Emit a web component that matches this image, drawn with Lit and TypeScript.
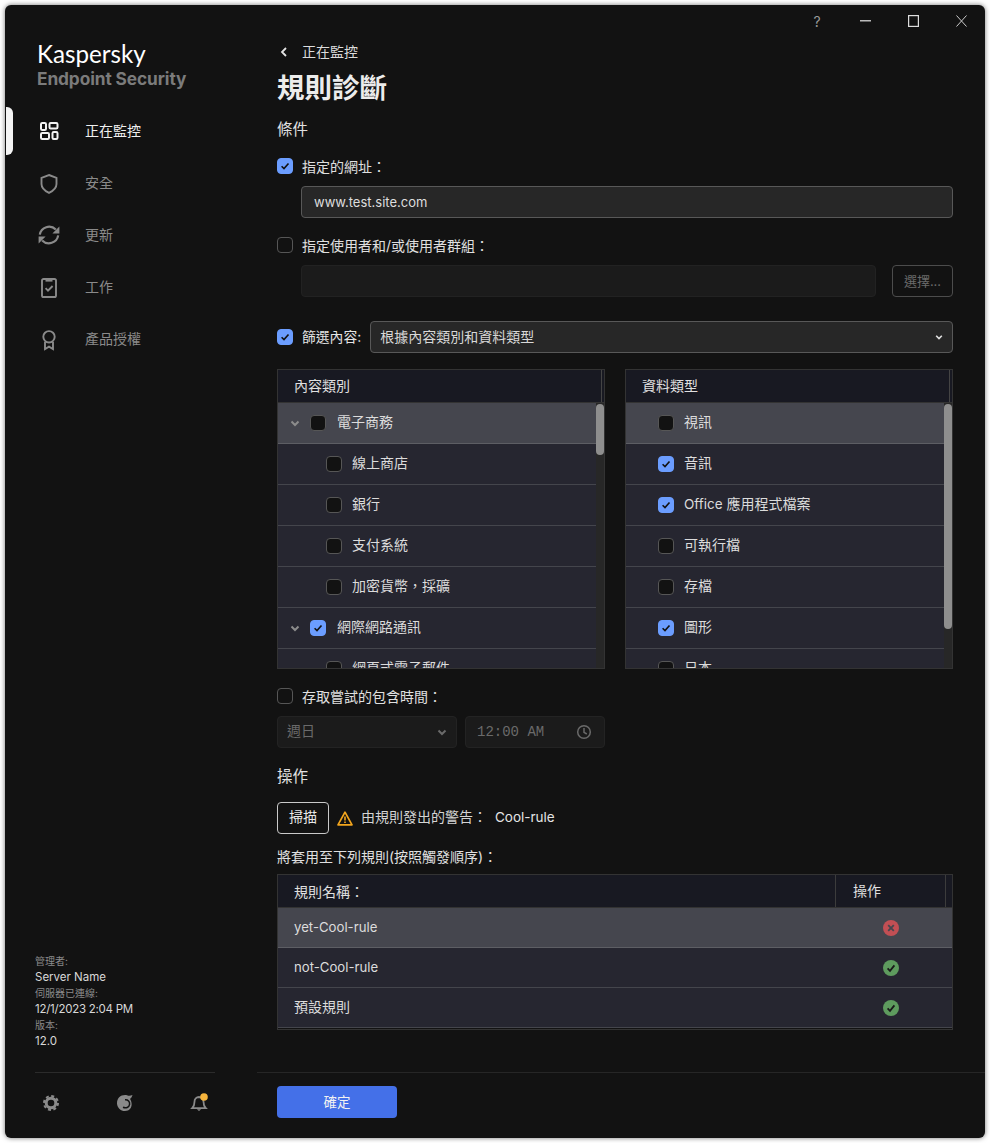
import { LitElement, html, css, svg } from "lit";
import { customElement } from "lit/decorators.js";

const check = (on: boolean) => html`<span class="cb ${on ? "on" : ""}">${on
  ? html`<svg width="10" height="10" viewBox="0 0 10 10"><path d="M1.6 5.2 4 7.6 8.5 2.4" fill="none" stroke="#121212" stroke-width="1.6"/></svg>` : ""}</span>`;
const chev = html`<svg class="chev" width="10" height="10" viewBox="0 0 10 10"><path d="M1.5 3.5 5 7 8.500 3.500" fill="none" stroke="currentColor" stroke-width="2"/></svg>`;

const navIcons = [
  svg`<g fill="none" stroke="#f2f2f2" stroke-width="2"><rect x="1" y="1" width="5" height="7" rx="1.2"/><rect x="9.500" y="1" width="8" height="5.500" rx="1.2"/><rect x="1" y="11" width="8" height="6" rx="1.2"/><rect x="12.500" y="10" width="5" height="7" rx="1.2"/></g>`,
  svg`<path d="M9 1 16.500 3.800V10C16.500 14 13 17 9 18.900 5 17 1.500 14 1.500 10V3.800Z" fill="none" stroke="#8a8a8a" stroke-width="1.900"/>`,
  svg`<g fill="none" stroke="#8a8a8a" stroke-width="2.200"><path d="M-.2 8.600A9.400 9.400 0 0 1 15.800 3.600"/><path d="M18.200 9.400A9.400 9.400 0 0 1 2.200 14.400"/></g><path d="M19.400 .4V7.400H12.400Z M-1.400 17.600V10.600H5.600Z" fill="#8a8a8a"/>`,
  svg`<g fill="none" stroke="#8a8a8a" stroke-width="1.900"><rect x="2" y="1" width="14" height="18" rx="1.600"/><path d="M5.600 10.200 8 12.600 12.600 8"/></g><path d="M5.500 1H12.500V3.600H5.500Z" fill="#8a8a8a"/>`,
  svg`<g fill="none" stroke="#8a8a8a" stroke-width="1.900"><circle cx="9" cy="6.800" r="5.700"/><path d="M5 12V19L9 16.600 13 19V12"/></g>`,
];
const nav = ["正在監控", "安全", "更新", "工作", "產品授權"];
const left: [string, boolean, boolean][] = [
  ["電子商務", false, true], ["線上商店", false, false], ["銀行", false, false],
  ["支付系統", false, false], ["加密貨幣，採礦", false, false], ["網際網路通訊", true, true], ["網頁式電子郵件", false, false],
];
const right: [string, boolean][] = [
  ["視訊", false], ["音訊", true], ["Office 應用程式檔案", true], ["可執行檔", false], ["存檔", false], ["圖形", true], ["日本", false],
];

@customElement("app-root")
export class AppRoot extends LitElement {
  static styles = css`
    :host { display: block; width: 990px; height: 1143px; background: #fff; padding: 5px; box-sizing: border-box;
      font-family: Inter, "Noto Sans CJK TC", sans-serif; font-size: 14px; color: #e4e4e4; }
    * { box-sizing: border-box; }
    .win { width: 980px; height: 1133px; background: #121212; border-radius: 6px; display: flex; overflow: hidden;
      box-shadow: 0 0 5px rgba(0,0,0,.55); }
    .side { width: 252px; flex: none; display: flex; flex-direction: column; }
    .brand { padding: 33px 0 0 32px; height: 100px; }
    .k { font-family: Lato, sans-serif; font-size: 24.200px; line-height: 31px; color: #fff; font-weight: 400; }
    .e { font-size: 17.3px; line-height: 20px; color: #7b7b7b; font-weight: 700; letter-spacing: -.1px; }
    .nav { height: 52px; display: flex; align-items: center; color: #8a8a8a; font-size: 14px; }
    .nav.sel { color: #f0f0f0; }
    .nav b { font-weight: 400; padding-bottom: 2px; }
    .ind { width: 7px; height: 48px; margin-left: 1px; margin-right: 27px; border-radius: 0 6px 6px 0; }
    .nav.sel .ind { background: #f4f4f4; }
    .nav svg { width: 18px; height: 20px; overflow: visible; margin: 2px 27px 0 0; flex: none; }
    .grow { flex: 1; }
    .info { padding-left: 30px; font-size: 11.5px; line-height: 16px; color: #d8d8d8; }
    .info .l { font-size: 10px; color: #8a8a8a; }
    .date { letter-spacing: -.25px; }
    .line { margin: 23px 0 0 30px; width: 180px; height: 1px; background: #2b2b2b; }
    .tools { height: 65px; display: flex; padding: 0 0 5px 37px; align-items: center; }
    .tools span { width: 74px; flex: none; display: flex; }
    .tools svg { overflow: visible; }
    .main { flex: 1; min-width: 0; display: flex; flex-direction: column; }
    .bar { height: 32px; display: flex; justify-content: flex-end; align-items: center; flex: none; }
    .bar span { width: 48px; display: flex; justify-content: center; color: #9a9a9a; font-size: 14px; }
    .content { padding: 0 32px 0 20px; display: flex; flex-direction: column; flex: 1; }
    .back { margin-top: 5px; height: 20px; display: flex; align-items: center; font-size: 14px; color: #dcdcdc; }
    .back span { padding-bottom: 2px; }
    .back svg { margin: 0 14px 0 3px; }
    h1 { margin: 8px 0 0; height: 36px; font-size: 27.5px; line-height: 36px; font-weight: 700; color: #ececec; }
    h2 { margin: 14px 0 0; height: 19px; font-size: 15.5px; line-height: 20px; font-weight: 400; color: #e0e0e0; }
    .row { height: 20px; margin-top: 17px; display: flex; align-items: center; gap: 9px; font-size: 14px; color: #e0e0e0; }
    .cb { width: 16px; height: 16px; flex: none; border-radius: 4px; border: 1px solid #565656; background: #121212; display: inline-flex; align-items: center; justify-content: center; }
    .cb.on { background: #6b9dff; border-color: #6b9dff; }
    .indent { margin: 10px 0 0 24px; display: flex; gap: 16px; }
    .field { height: 32px; flex: 1; border-radius: 4px; display: flex; align-items: center; padding: 0 12px; font-size: 13px; }
    .f1 { background: #272727; border: 1px solid #585858; color: #dedede; }
    .f2 { background: #1b1b1b; border: 1px solid #222; }
    .pick { width: 61px; height: 32px; flex: none; border: 1px solid #4c4c4c; border-radius: 4px; display: flex; align-items: center; justify-content: center; color: #6a6a6a; font-size: 13px; padding-bottom: 2px; }
    .r3 { margin-top: 24px; height: 32px; display: flex; align-items: center; gap: 9px; }
    .r3 > span:nth-child(2) { padding-bottom: 2px; font-size: 13.800px; }
    .sel3 { flex: 1; height: 32px; border-radius: 4px; border: 1px solid #585858; background: #272727; display: flex; align-items: center; justify-content: space-between; padding: 0 9px 0 9px; color: #d8d8d8; font-size: 14px; }
    .sel3 span { padding-bottom: 3px; }
    .sel3 .chev { color: #e0e0e0; width: 8px; }
    .tables { margin-top: 16px; display: flex; gap: 20px; }
    .tbl { width: 328px; height: 300px; border: 1px solid #333; display: flex; flex-direction: column; overflow: hidden; }
    .th { height: 33px; flex: none; background: #181922; border-bottom: 1px solid #333; display: flex; align-items: center; padding-left: 16px; font-size: 14px; color: #e0e0e0; }
    .th span { padding-bottom: 2px; }
    .th i { margin-left: auto; width: 1px; height: 100%; background: #444; margin-right: 2px; }
    .body { flex: 1; display: flex; min-height: 0; }
    .list { flex: 1; min-width: 0; overflow: hidden; }
    .it { height: 41px; background: #262630; border-bottom: 1px solid #44454c; display: flex; align-items: center; gap: 11px; font-size: 14px; color: #dcdcdc; }
    .it > span:last-child { padding-bottom: 4px; }
    .it.s { background: #45464e; border-bottom-color: #5d5e64; }
    .it .chev { color: #8c8c8c; margin-left: 12px; margin-right: -1px; }
    .it.sub { padding-left: 48px; gap: 10px; }
    .it.r { padding-left: 32px; gap: 10px; }
    .lat { font-size: 13.500px; }
    .track { width: 8px; flex: none; background: #272727; padding-top: 1px; }
    .thumb { width: 8px; background: #8e8e8e; border-radius: 4px; }
    .sm { display: flex; gap: 8px; margin-top: 10px; }
    .d { height: 32px; border-radius: 4px; background: #1b1b1b; border: 1px solid #232323; display: flex; align-items: center; justify-content: space-between; color: #6a6a6a; padding: 0 9px; }
    .d1 { width: 180px; font-size: 14px; }
    .d1 span { padding-bottom: 4px; }
    .d2 { width: 140px; font-family: "Liberation Mono", monospace; font-size: 14px; padding: 0 12px 0 11px; }
    .h2b { margin-top: 19px; }
    .scan { margin-top: 16px; height: 32px; display: flex; align-items: center; font-size: 14px; color: #d4d4d4; }
    .btn { width: 52px; height: 32px; border: 1px solid #c9c9c9; border-radius: 4px; display: flex; align-items: center; justify-content: center; color: #e8e8e8; margin-right: 8px; padding-bottom: 4px; }
    .scan svg { margin-right: 8px; }
    .scan > span { padding-bottom: 4px; }
    .scan b { font-weight: 400; font-size: 13.500px; color: #e4e4e4; margin-left: 8px; }
    .lbl { margin-top: 13px; height: 20px; line-height: 20px; font-size: 14px; color: #e0e0e0; }
    .rules { margin-top: 7px; height: 156px; border: 1px solid #333; overflow: hidden; width: 676px; }
    .rh { height: 33px; background: #181922; display: flex; align-items: center; font-size: 14px; color: #e0e0e0; border-bottom: 1px solid #333; }
    .rh .a { flex: 1; padding: 0 0 1px 16px; }
    .rh .b { width: 111px; height: 100%; border-left: 1px solid #3c3c3c; border-right: 1px solid #3c3c3c; padding: 0 0 2px 17px; display: flex; align-items: center; margin-right: 6px; }
    .rr { height: 40px; background: #262630; border-bottom: 1px solid #44454c; display: flex; align-items: center; font-size: 13.200px; color: #dcdcdc; padding-left: 16px; }
    .rr.s { background: #45464e; border-bottom-color: #5d5e64; }
    .rr span { flex: 1; padding-bottom: 2px; }
    .rr span.c { font-size: 14px; padding-bottom: 4px; }
    .rr em { width: 16px; height: 16px; margin-right: 53px; display: flex; }
    .foot { height: 66px; flex: none; border-top: 1px solid #262626; padding: 13px 0 0 20px; }
    .ok { width: 120px; height: 32px; background: #4470e8; border-radius: 4px; display: flex; align-items: center; justify-content: center; color: #f2f2f2; font-size: 13.500px; padding-bottom: 3px; }
  `;

  private table(title: string, thumb: number, rows: unknown[]) {
    return html`<div class="tbl">
      <div class="th"><span>${title}</span><i></i></div>
      <div class="body"><div class="list">${rows}</div>
        <div class="track"><div class="thumb" style="height:${thumb}px"></div></div></div>
    </div>`;
  }

  render() {
    const lrows = left.map(([t, on, parent], i) => html`<div class="it ${i === 0 ? "s" : ""} ${parent ? "" : "sub"}">${parent ? chev : ""}${check(on)}<span>${t}</span></div>`);
    const rrows = right.map(([t, on], i) => html`<div class="it r ${i === 0 ? "s" : ""}">${check(on)}<span>${t.startsWith("Office ")
      ? html`<i class="lat" style="font-style:normal">Office</i>${t.slice(6)}` : t}</span></div>`);
    const okI = html`<svg width="16" height="16" viewBox="0 0 16 16"><circle cx="8" cy="8" r="8" fill="#5e9b5e"/><path d="M4.600 8.400 7 10.800 11.400 5.400" fill="none" stroke="#1a1a1a" stroke-width="1.800"/></svg>`;
    const noI = html`<svg width="16" height="16" viewBox="0 0 16 16"><circle cx="8" cy="8" r="8" fill="#c24f54"/><path d="M5.200 5.200 10.800 10.800M10.800 5.200 5.200 10.800" stroke="#45464e" stroke-width="1.800"/></svg>`;
    return html`<div class="win">
      <div class="side">
        <div class="brand"><div class="k">Kaspersky</div><div class="e">Endpoint Security</div></div>
        ${nav.map((n, i) => html`<div class="nav ${i === 0 ? "sel" : ""}"><span class="ind"></span><svg viewBox="0 0 18 20">${navIcons[i]}</svg><b>${n}</b></div>`)}
        <div class="grow"></div>
        <div class="info">
          <div class="l">管理者:</div><div>Server Name</div>
          <div class="l">伺服器已連線:</div><div class="date">12/1/2023 2:04 PM</div>
          <div class="l">版本:</div><div>12.0</div>
        </div>
        <div class="line"></div>
        <div class="tools">
          <span><svg width="18" height="18" viewBox="0 0 18 18"><circle cx="9" cy="9" r="4.800" fill="none" stroke="#8a8a8a" stroke-width="3"/><circle cx="9" cy="9" r="7" fill="none" stroke="#8a8a8a" stroke-width="2" stroke-dasharray="3 2.500"/></svg></span>
          <span><svg width="18" height="18" viewBox="0 0 18 18"><path d="M16.500 1C14 2 13 2 11 1.200 5 .2 1 4 1 9.200 1 13.500 4.500 17 9 17 13.500 17 16 13.500 15.600 9.500 15.400 7.500 14.800 6 14 5 15 4 16 3 16.500 1Z" fill="#8a8a8a"/><path d="M9 5.800C12 5.500 14 7.800 13.600 10.300 13 13.500 9.800 14.600 7 13.300" fill="none" stroke="#121212" stroke-width="1.500"/></svg></span>
          <span><svg width="18" height="18" viewBox="0 0 18 18"><path d="M9 3A4.700 4.700 0 0 0 4.500 7.800C4.500 11 3.800 12.500 2.200 14.200H15.800C14.200 12.500 13.500 11 13.500 7.800A4.700 4.700 0 0 0 9 3Z" fill="none" stroke="#8a8a8a" stroke-width="1.800"/><path d="M6.800 15.200H11.200L9 17Z" fill="#8a8a8a"/><circle cx="14" cy="3" r="3.800" fill="#f5b43c"/></svg></span>
        </div>
      </div>
      <div class="main">
        <div class="bar">
          <span>?</span>
          <span><svg width="11" height="2"><rect width="11" height="1.500" fill="#bbb"/></svg></span>
          <span><svg width="11" height="12"><rect x=".6" y=".6" width="9.800" height="10.800" fill="none" stroke="#ddd" stroke-width="1.200"/></svg></span>
          <span><svg width="11" height="12" viewBox="0 0 11 12"><path d="M.5 .5 10.500 11.500M10.500 .5 .5 11.500" stroke="#ccc" stroke-width="1"/></svg></span>
        </div>
        <div class="content">
          <div class="back"><svg width="8" height="10" viewBox="0 0 8 10"><path d="M6 1 2 5 6 9" fill="none" stroke="#e4e4e4" stroke-width="1.800"/></svg><span>正在監控</span></div>
          <h1>規則診斷</h1>
          <h2>條件</h2>
          <div class="row">${check(true)}<span>指定的網址：</span></div>
          <div class="indent"><div class="field f1">www.test.site.com</div></div>
          <div class="row">${check(false)}<span>指定使用者和/或使用者群組：</span></div>
          <div class="indent"><div class="field f2"></div><div class="pick">選擇...</div></div>
          <div class="r3">${check(true)}<span>篩選內容:</span><div class="sel3"><span>根據內容類別和資料類型</span>${chev}</div></div>
          <div class="tables">
            ${this.table("內容類別", 51, lrows)}
            ${this.table("資料類型", 225, rrows)}
          </div>
          <div class="row">${check(false)}<span>存取嘗試的包含時間：</span></div>
          <div class="sm">
            <div class="d d1"><span>週日</span>${chev}</div>
            <div class="d d2">12:00 AM<svg width="16" height="16" viewBox="0 0 16 16"><circle cx="8" cy="8" r="6.300" fill="none" stroke="#6a6a6a" stroke-width="1.500"/><path d="M8 4V8.300L10.800 10" fill="none" stroke="#6a6a6a" stroke-width="1.500"/></svg></div>
          </div>
          <h2 class="h2b">操作</h2>
          <div class="scan"><div class="btn">掃描</div>
            <svg width="16" height="15" viewBox="0 0 16 15"><path d="M8 1.200 15 13.800H1Z" fill="none" stroke="#f2a51d" stroke-width="1.700" stroke-linejoin="round"/><path d="M8 5.500V9.500M8 10.500V12" stroke="#f2a51d" stroke-width="1.600"/></svg>
            <span>由規則發出的警告：<b>Cool-rule</b></span></div>
          <div class="lbl">將套用至下列規則(按照觸發順序)：</div>
          <div class="rules">
            <div class="rh"><div class="a">規則名稱：</div><div class="b">操作</div></div>
            <div class="rr s"><span>yet-Cool-rule</span><em>${noI}</em></div>
            <div class="rr"><span>not-Cool-rule</span><em>${okI}</em></div>
            <div class="rr"><span class="c">預設規則</span><em>${okI}</em></div>
          </div>
        </div>
        <div class="foot"><div class="ok">確定</div></div>
      </div>
    </div>`;
  }
}
